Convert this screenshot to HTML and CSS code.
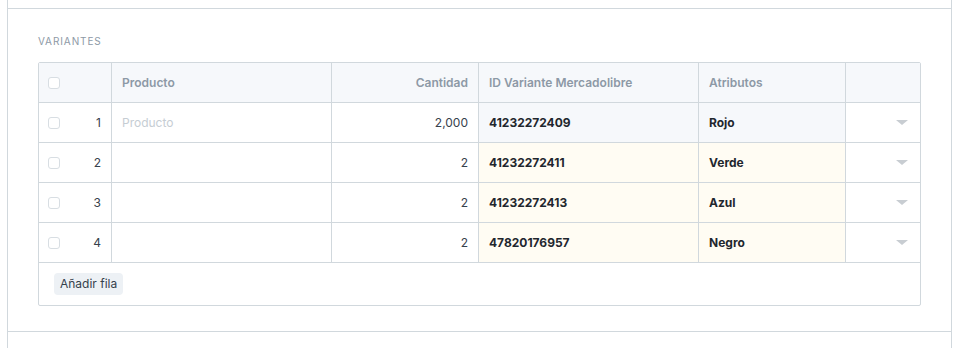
FILE: index.html
```html
<!DOCTYPE html>
<html lang="es">

<head>
    <meta charset="UTF-8">
    <meta name="viewport" content="width=device-width, initial-scale=1.0">
    <title>Variantes</title>
    <link rel="stylesheet" href="styles.css">
</head>

<body>
    <div class="layout">
        <div class="prev-section"></div>
        <section class="form-section">
            <div class="section-label">Variantes</div>
            <div class="grid">
                <div class="grid-row grid-head">
                    <div class="cell col-idx"><span class="check"></span></div>
                    <div class="cell">Producto</div>
                    <div class="cell right">Cantidad</div>
                    <div class="cell">ID Variante Mercadolibre</div>
                    <div class="cell">Atributos</div>
                    <div class="cell last"></div>
                </div>
                <div class="grid-row">
                    <div class="cell col-idx"><span class="check"></span><span class="idx">1</span></div>
                    <div class="cell placeholder">Producto</div>
                    <div class="cell right">2,000</div>
                    <div class="cell static bold">41232272409</div>
                    <div class="cell static bold">Rojo</div>
                    <div class="cell last"><span class="caret"></span></div>
                </div>
                <div class="grid-row">
                    <div class="cell col-idx"><span class="check"></span><span class="idx">2</span></div>
                    <div class="cell"></div>
                    <div class="cell right">2</div>
                    <div class="cell edited bold">41232272411</div>
                    <div class="cell edited bold">Verde</div>
                    <div class="cell last"><span class="caret"></span></div>
                </div>
                <div class="grid-row">
                    <div class="cell col-idx"><span class="check"></span><span class="idx">3</span></div>
                    <div class="cell"></div>
                    <div class="cell right">2</div>
                    <div class="cell edited bold">41232272413</div>
                    <div class="cell edited bold">Azul</div>
                    <div class="cell last"><span class="caret"></span></div>
                </div>
                <div class="grid-row">
                    <div class="cell col-idx"><span class="check"></span><span class="idx">4</span></div>
                    <div class="cell"></div>
                    <div class="cell right">2</div>
                    <div class="cell edited bold">47820176957</div>
                    <div class="cell edited bold">Negro</div>
                    <div class="cell last"><span class="caret"></span></div>
                </div>
                <div class="grid-footer">
                    <button class="btn-add">Añadir fila</button>
                </div>
            </div>
        </section>
        <div class="next-section"></div>
    </div>
</body>

</html>
```

FILE: styles.css
```css
* {
    margin: 0;
    padding: 0;
    box-sizing: border-box;
}

body {
    background: #fff;
    font-family: Inter, "Noto Sans", sans-serif;
    font-size: 12px;
    color: #36414c;
}

.layout {
    width: 945px;
    margin-left: 7px;
    border-left: 1px solid #d1d8dd;
    border-right: 1px solid #d1d8dd;
}

.prev-section {
    height: 8px;
}

.form-section {
    border-top: 1px solid #d1d8dd;
    border-bottom: 1px solid #d1d8dd;
    padding: 26px 30px 25px 30px;
}

.next-section {
    height: 16px;
}

.section-label {
    font-size: 10px;
    line-height: 12px;
    letter-spacing: 0.9px;
    text-transform: uppercase;
    color: #8d99a6;
    margin-bottom: 15px;
}

.grid {
    border: 1px solid #d1d8dd;
    border-radius: 2px;
}

.grid-row {
    display: grid;
    grid-template-columns: 73px 220px 147px 220px 147px 1fr;
    height: 40px;
    border-bottom: 1px solid #d1d8dd;
}

.grid-head {
    background: #f6f8fb;
    color: #8d99a6;
    font-weight: 600;
}

.cell {
    display: flex;
    align-items: center;
    padding: 0 10px;
    border-right: 1px solid #d1d8dd;
    white-space: nowrap;
}

.cell.last {
    border-right: none;
    justify-content: flex-end;
    padding-right: 12px;
}

.cell.right {
    justify-content: flex-end;
}

.col-idx {
    padding-left: 9px;
    justify-content: space-between;
}

.idx {
    color: #36414c;
}

.check {
    width: 12px;
    height: 12px;
    border: 1px solid #d8dee3;
    border-radius: 3px;
    background: #fff;
}

.placeholder {
    color: #c6cdd3;
}

.static {
    background: #f6f8fb;
}

.edited {
    background: #fffcf3;
}

.bold {
    font-weight: 700;
    color: #1f272e;
}

.caret {
    width: 0;
    height: 0;
    border-left: 6px solid transparent;
    border-right: 6px solid transparent;
    border-top: 5px solid #c8cdd2;
}

.grid-footer {
    height: 42px;
    padding: 10px 15px;
}

.btn-add {
    font-family: inherit;
    font-size: 12px;
    line-height: 22px;
    height: 22px;
    padding: 0 6px;
    border: none;
    border-radius: 4px;
    background: #edf1f5;
    color: #36414c;
}
```
